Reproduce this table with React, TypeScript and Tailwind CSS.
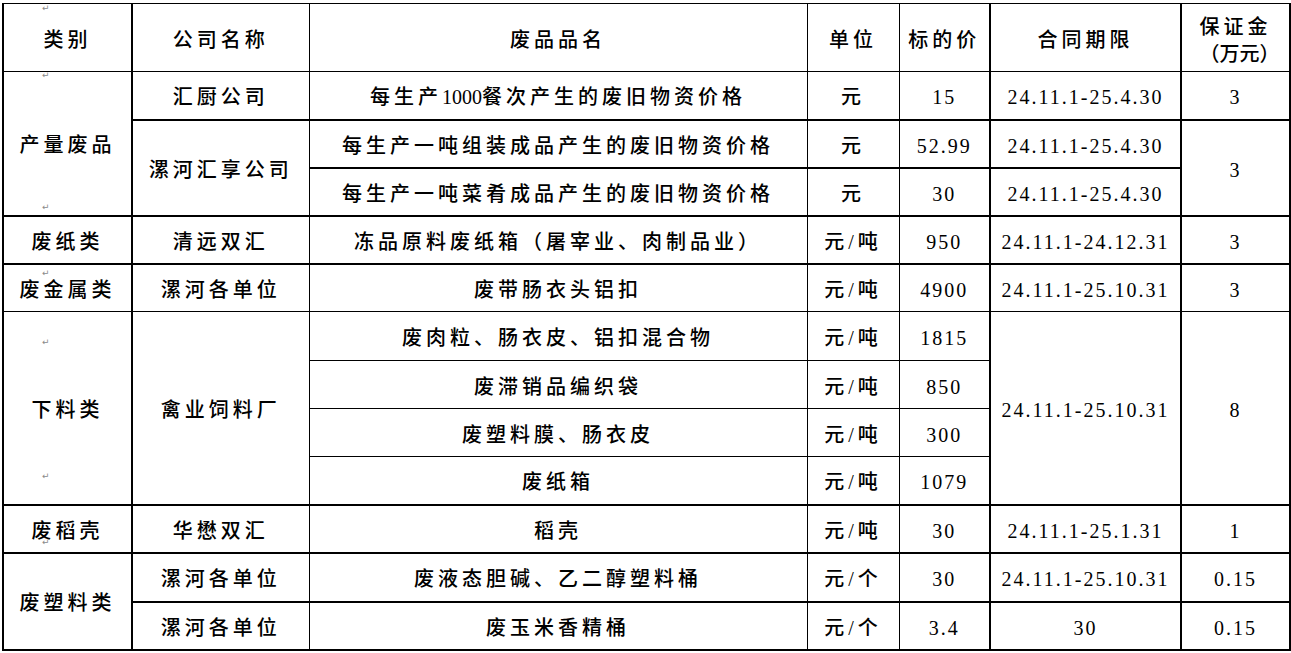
import type { ReactNode } from "react";

type CellProps = {
  children?: ReactNode;
  rowSpan?: number;
  l?: boolean; // thick left edge
  r?: boolean; // thick right edge
  t?: boolean; // thick top edge
  num?: boolean; // numeric text
};

function Td({ children, rowSpan, l, r, t, num }: CellProps) {
  return (
    <td
      rowSpan={rowSpan}
      className={`border border-black p-0 pt-[4px] text-center align-middle text-[20px] leading-none ${
        num ? "tracking-[2px]" : "font-medium tracking-[4px]"
      } ${l ? "border-l-2" : ""} ${r ? "border-r-2" : ""} ${t ? "border-t-2" : ""}`}
    >
      {children}
    </td>
  );
}

// Word 段落标记
const MARKS = [
  { x: 42, y: 4 },
  { x: 42, y: 71 },
  { x: 42, y: 203 },
  { x: 42, y: 269 },
  { x: 42, y: 338 },
  { x: 42, y: 472 },
  { x: 42, y: 538 },
];

export default function App() {
  return (
    <div
      className="relative h-[653px] w-[1291px] overflow-hidden bg-white text-black"
      style={{ fontFamily: '"Liberation Serif", "Noto Sans CJK SC", serif' }}
    >
      <table className="ml-[2px] mt-[3px] w-[1287px] table-fixed border-collapse border-t border-b-2 border-black">
        <colgroup>
          <col className="w-[129px]" />
          <col className="w-[177px]" />
          <col className="w-[498px]" />
          <col className="w-[92px]" />
          <col className="w-[91px]" />
          <col className="w-[191px]" />
          <col className="w-[109px]" />
        </colgroup>
        <tbody>
          <tr className="h-[68px]">
            <Td l r>类别</Td>
            <Td>公司名称</Td>
            <Td>废品品名</Td>
            <Td>单位</Td>
            <Td r>标的价</Td>
            <Td r>合同期限</Td>
            <Td r>
              <div className="leading-[28px]">保证金</div>
              <div className="-mr-[8px] tracking-normal leading-[26px]">（万元）</div>
            </Td>
          </tr>

          <tr className="h-[48px]">
            <Td l r rowSpan={3}>产量废品</Td>
            <Td>汇厨公司</Td>
            <Td>
              每生产<span className="font-normal tracking-normal">1000</span>餐次产生的废旧物资价格
            </Td>
            <Td>元</Td>
            <Td num r>15</Td>
            <Td num r>24.11.1-25.4.30</Td>
            <Td num r>3</Td>
          </tr>
          <tr className="h-[48px]">
            <Td t rowSpan={2}>漯河汇享公司</Td>
            <Td t>每生产一吨组装成品产生的废旧物资价格</Td>
            <Td t>元</Td>
            <Td num t r>52.99</Td>
            <Td num t r>24.11.1-25.4.30</Td>
            <Td num t r rowSpan={2}>3</Td>
          </tr>
          <tr className="h-[48px]">
            <Td t>每生产一吨菜肴成品产生的废旧物资价格</Td>
            <Td t>元</Td>
            <Td num t r>30</Td>
            <Td num t r>24.11.1-25.4.30</Td>
          </tr>

          <tr className="h-[48px]">
            <Td l r t>废纸类</Td>
            <Td t>清远双汇</Td>
            <Td t>冻品原料废纸箱（屠宰业、肉制品业）</Td>
            <Td t>元/吨</Td>
            <Td num t r>950</Td>
            <Td num t r>24.11.1-24.12.31</Td>
            <Td num t r>3</Td>
          </tr>

          <tr className="h-[48px]">
            <Td l r t>废金属类</Td>
            <Td t>漯河各单位</Td>
            <Td t>废带肠衣头铝扣</Td>
            <Td t>元/吨</Td>
            <Td num t r>4900</Td>
            <Td num t r>24.11.1-25.10.31</Td>
            <Td num t r>3</Td>
          </tr>

          <tr className="h-[49px]">
            <Td l r rowSpan={4}>下料类</Td>
            <Td rowSpan={4}>禽业饲料厂</Td>
            <Td>废肉粒、肠衣皮、铝扣混合物</Td>
            <Td>元/吨</Td>
            <Td num r>1815</Td>
            <Td num r rowSpan={4}>24.11.1-25.10.31</Td>
            <Td num r rowSpan={4}>8</Td>
          </tr>
          <tr className="h-[48px]">
            <Td>废滞销品编织袋</Td>
            <Td>元/吨</Td>
            <Td num r>850</Td>
          </tr>
          <tr className="h-[48px]">
            <Td>废塑料膜、肠衣皮</Td>
            <Td>元/吨</Td>
            <Td num r>300</Td>
          </tr>
          <tr className="h-[48px]">
            <Td>废纸箱</Td>
            <Td>元/吨</Td>
            <Td num r>1079</Td>
          </tr>

          <tr className="h-[48px]">
            <Td l r t>废稻壳</Td>
            <Td t>华懋双汇</Td>
            <Td t>稻壳</Td>
            <Td t>元/吨</Td>
            <Td num t r>30</Td>
            <Td num t r>24.11.1-25.1.31</Td>
            <Td num t r>1</Td>
          </tr>

          <tr className="h-[49px]">
            <Td l r t rowSpan={2}>废塑料类</Td>
            <Td t>漯河各单位</Td>
            <Td t>废液态胆碱、乙二醇塑料桶</Td>
            <Td t>元/个</Td>
            <Td num t r>30</Td>
            <Td num t r>24.11.1-25.10.31</Td>
            <Td num t r>0.15</Td>
          </tr>
          <tr className="h-[48px]">
            <Td t>漯河各单位</Td>
            <Td t>废玉米香精桶</Td>
            <Td t>元/个</Td>
            <Td num t r>3.4</Td>
            <Td num t r>30</Td>
            <Td num t r>0.15</Td>
          </tr>
        </tbody>
      </table>

      {MARKS.map((m, i) => (
        <span
          key={i}
          className="absolute text-[9px] leading-none text-[#8a8a8a]"
          style={{ left: m.x, top: m.y, fontFamily: '"DejaVu Sans", sans-serif' }}
        >
          ↵
        </span>
      ))}
    </div>
  );
}
